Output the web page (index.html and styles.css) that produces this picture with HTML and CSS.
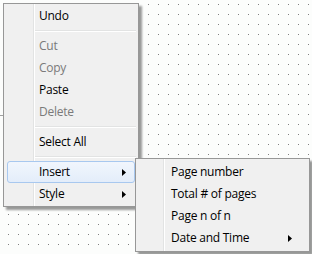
FILE: index.html
```html
<!DOCTYPE html>
<html>
<head>
<meta charset="utf-8">
<link rel="stylesheet" href="styles.css">
</head>
<body>
<div class="canvas">
  <div class="edge-line"></div>
  <div class="menu main-menu">
    <div class="item">Undo</div>
    <div class="sep"></div>
    <div class="item disabled">Cut</div>
    <div class="item disabled">Copy</div>
    <div class="item">Paste</div>
    <div class="item disabled">Delete</div>
    <div class="sep"></div>
    <div class="item">Select All</div>
    <div class="sep"></div>
    <div class="item active"><span>Insert</span><svg class="arrow" width="4" height="7" viewBox="0 0 4 7"><polygon points="0,0 4,3.5 0,7" fill="#000"/></svg></div>
    <div class="item"><span>Style</span><svg class="arrow" width="4" height="7" viewBox="0 0 4 7"><polygon points="0,0 4,3.5 0,7" fill="#000"/></svg></div>
  </div>
  <div class="menu sub-menu">
    <div class="item">Page number</div>
    <div class="item">Total # of pages</div>
    <div class="item">Page n of n</div>
    <div class="item"><span>Date and Time</span><svg class="arrow" width="4" height="7" viewBox="0 0 4 7"><polygon points="0,0 4,3.5 0,7" fill="#000"/></svg></div>
  </div>
</div>
</body>
</html>
```
FILE: styles.css
```css
html, body {
  margin: 0;
  padding: 0;
}
body {
  width: 312px;
  height: 254px;
  overflow: hidden;
  font-family: "Open Sans", "Noto Sans", sans-serif;
  font-size: 12px;
  letter-spacing: -0.25px;
}
.canvas {
  position: relative;
  width: 312px;
  height: 254px;
  background-color: #fcfdfc;
  background-image:
    linear-gradient(to bottom, #fcfdfc 0 9px, transparent 9px 10px),
    linear-gradient(to right, #808080 0 1px, #fcfdfc 1px 10px);
  background-size: 10px 10px, 10px 10px;
  background-position: 8px 5px, 8px 5px;
}
.edge-line {
  position: absolute;
  left: 0;
  top: 115px;
  width: 4px;
  height: 1px;
  background: #a0a0a0;
}
.menu {
  position: absolute;
  box-sizing: border-box;
  border: 1px solid #979797;
  background-color: #f0f0f0;
  box-shadow: 3px 3px 2px rgba(0, 0, 0, 0.4);
  display: flex;
  flex-direction: column;
}
.main-menu {
  left: 3px;
  top: 3px;
  width: 136px;
  padding: 1px 2px;
  background-image: linear-gradient(to right, transparent 29px, #e2e3e3 29px 30px, #ffffff 30px 31px, transparent 31px);
}
.sub-menu {
  left: 135px;
  top: 158px;
  width: 175px;
  padding: 2px 2px;
  background-image: linear-gradient(to right, transparent 27px, #e2e3e3 27px 28px, #ffffff 28px 29px, transparent 29px);
}
.item {
  height: 22px;
  box-sizing: border-box;
  display: flex;
  align-items: center;
  justify-content: space-between;
  padding: 0 8px 0 31px;
  color: #000;
  border: 1px solid transparent;
  border-radius: 3px;
  margin: 0 1px;
  line-height: 20px;
}
.sub-menu .item {
  padding-left: 31px;
  padding-right: 13px;
}
.item.disabled {
  color: #7a7a7a;
}
.item.active {
  border-color: #a8c8ef;
  background: linear-gradient(to bottom, #f1f6fd, #e3edfa);
}
.sep {
  height: 8px;
  margin-left: 29px;
  background: linear-gradient(to bottom, transparent 3px, #e2e3e3 3px 4px, #ffffff 4px 5px, transparent 5px);
}
.arrow {
  display: block;
}
```
